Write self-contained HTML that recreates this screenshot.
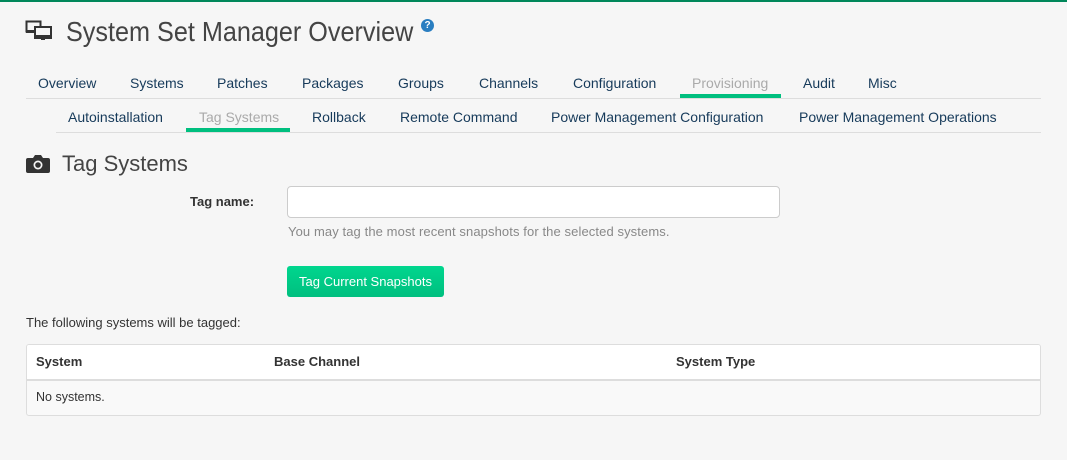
<!DOCTYPE html>
<html><head><style>
body{margin:0;width:1067px;height:460px;background:#f6f6f6;font-family:"Liberation Sans",sans-serif;position:relative;overflow:hidden}
.a{position:absolute;white-space:nowrap}
.t{font-size:14px;color:#163a5a;top:75px}
.s{font-size:14px;color:#163a5a;top:109px}
</style></head><body>
<div class="a" style="left:0;top:0;width:1067px;height:2px;background:#00875a"></div>
<svg class="a" style="left:25px;top:20px" width="28" height="22" viewBox="0 0 28 22">
<rect x="1.5" y="1.5" width="14" height="10" fill="none" stroke="#333" stroke-width="2"/>
<rect x="1" y="10" width="15" height="3" fill="#333"/>
<rect x="9" y="6" width="17" height="11" fill="#f6f6f6"/>
<rect x="10" y="7" width="16" height="11" fill="none" stroke="#333" stroke-width="2"/>
<rect x="9" y="15" width="18" height="3" fill="#333"/>
<rect x="16" y="18" width="4" height="2" fill="#333"/>
</svg>
<div class="a" style="left:66px;top:16px;font-size:28px;color:#444;transform:scaleX(0.9);transform-origin:0 0">System Set Manager Overview</div>
<div class="a" style="left:421px;top:19px;width:13px;height:13px;border-radius:50%;background:#2a7ec1;color:#fff;font-size:10px;font-weight:bold;text-align:center;line-height:13px">?</div>
<span class="a t" style="left:38px">Overview</span>
<span class="a t" style="left:130px">Systems</span>
<span class="a t" style="left:217px">Patches</span>
<span class="a t" style="left:302px">Packages</span>
<span class="a t" style="left:398px">Groups</span>
<span class="a t" style="left:479px">Channels</span>
<span class="a t" style="left:573px">Configuration</span>
<span class="a t" style="left:692px;color:#aaa">Provisioning</span>
<span class="a t" style="left:803px">Audit</span>
<span class="a t" style="left:868px">Misc</span>
<div class="a" style="left:26px;top:98px;width:1015px;height:1px;background:#ddd"></div>
<div class="a" style="left:680px;top:94px;width:101px;height:4px;background:#00bf7f"></div>
<span class="a s" style="left:68px">Autoinstallation</span>
<span class="a s" style="left:199px;color:#aaa">Tag Systems</span>
<span class="a s" style="left:312px">Rollback</span>
<span class="a s" style="left:400px">Remote Command</span>
<span class="a s" style="left:551px">Power Management Configuration</span>
<span class="a s" style="left:799px">Power Management Operations</span>
<div class="a" style="left:56px;top:132px;width:985px;height:1px;background:#ddd"></div>
<div class="a" style="left:186px;top:128px;width:104px;height:4px;background:#00bf7f"></div>
<svg class="a" style="left:26px;top:153px" width="24" height="22" viewBox="0 0 24 22">
<path d="M2 5h5l2-3h6l2 3h5a2 2 0 0 1 2 2v11a2 2 0 0 1-2 2H2a2 2 0 0 1-2-2V7a2 2 0 0 1 2-2z" fill="#333"/>
<circle cx="12" cy="12" r="4.5" fill="#f6f6f6"/><circle cx="12" cy="12" r="2.8" fill="#333"/>
</svg>
<div class="a" style="left:62px;top:151px;font-size:22px;color:#444">Tag Systems</div>
<div class="a" style="left:190px;top:194px;font-size:13px;font-weight:bold;color:#333">Tag name:</div>
<div class="a" style="left:287px;top:186px;width:491px;height:30px;background:#fff;border:1px solid #ccc;border-radius:4px"></div>
<div class="a" style="left:288px;top:224px;font-size:13px;color:#888;letter-spacing:0.1px">You may tag the most recent snapshots for the selected systems.</div>
<div class="a" style="left:287px;top:266px;width:157px;height:31px;background:linear-gradient(#00d68e,#00bf7f);border-radius:3px;color:#fff;font-size:13px;text-align:center;line-height:31px">Tag Current Snapshots</div>
<div class="a" style="left:26px;top:315px;font-size:13px;color:#333">The following systems will be tagged:</div>
<div class="a" style="left:26px;top:344px;width:1013px;height:70px;border:1px solid #ddd;border-radius:3px;background:#f9f9f9;overflow:hidden">
<div style="height:34px;background:#fff;border-bottom:2px solid #ddd;position:relative;font-size:13px;font-weight:bold;color:#333">
<span class="a" style="left:9px;top:9px">System</span><span class="a" style="left:247px;top:9px">Base Channel</span><span class="a" style="left:649px;top:9px">System Type</span></div>
<div class="a" style="left:9px;top:45px;font-size:12.5px;color:#333">No systems.</div>
</div>
</body></html>
